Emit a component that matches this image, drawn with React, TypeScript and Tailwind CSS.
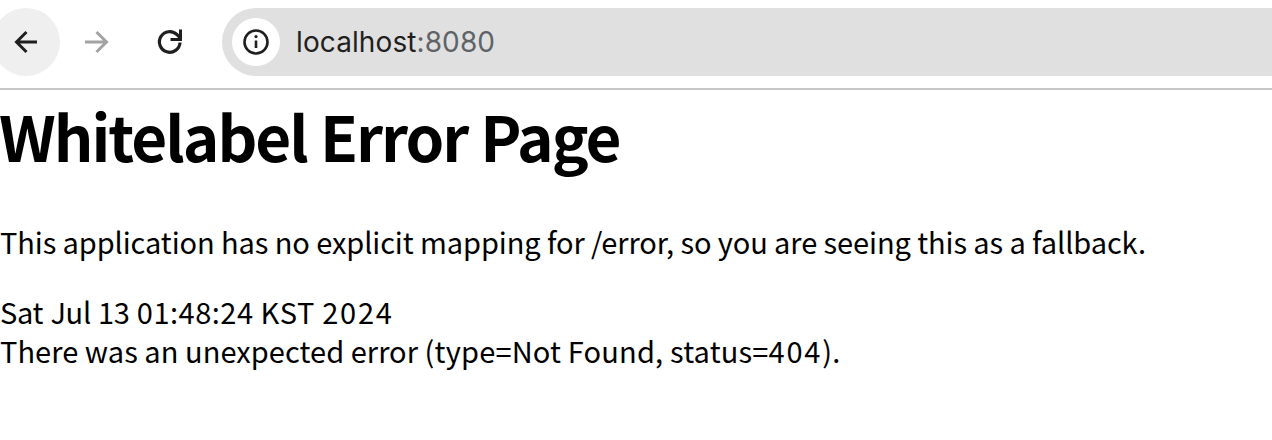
const font = "font-['Noto_Sans_CJK_KR','Noto_Sans',sans-serif]";

function Toolbar() {
  return (
    <div className="flex h-[90px] items-center overflow-hidden border-b-2 border-[#c7c7c7] bg-white pb-[4px]">
      <button className="-ml-2 flex h-[68px] w-[68px] shrink-0 items-center justify-center rounded-full bg-[#efefef]">
        <svg width="28" height="28" viewBox="0 0 28 28" fill="none" stroke="#1f1f1f" strokeWidth="3">
          <path d="M25 14H5M14.5 4 4.5 14l10 10" />
        </svg>
      </button>
      <button className="ml-[3px] flex h-[68px] w-[68px] shrink-0 items-center justify-center">
        <svg width="28" height="28" viewBox="0 0 28 28" fill="none" stroke="#a3a3a3" strokeWidth="3">
          <path d="M2 14h21M13.5 4l10 10-10 10" />
        </svg>
      </button>
      <button className="ml-[5px] flex h-[68px] w-[68px] shrink-0 items-center justify-center">
        <svg width="30" height="30" viewBox="0 0 30 30" fill="none" stroke="#1f1f1f" strokeWidth="3.2">
          <path d="M25 15.5a10.3 10.3 0 1 1-3-7.8l3 3" />
          <path d="M27 2.5v11.5H15.5l0-3h8.5V2.5z" fill="#1f1f1f" stroke="none" />
        </svg>
      </button>
      <div className="ml-[18px] flex h-[68px] flex-1 items-center rounded-l-[34px] bg-[#e0e0e0] pl-[10px]">
        <div className="flex h-[48px] w-[48px] items-center justify-center rounded-full bg-white">
          <svg width="28" height="28" viewBox="0 0 28 28" fill="none" stroke="#1f1f1f" strokeWidth="2.6">
            <circle cx="14" cy="14" r="11.5" />
            <path d="M14 12.5v7.5" />
            <circle cx="14" cy="8.6" r="1.6" fill="#1f1f1f" stroke="none" />
          </svg>
        </div>
        <span className="ml-[16px] font-['Inter',sans-serif] text-[28px] leading-none tracking-[0.1px] text-[#1f1f1f]">
          localhost<span className="text-[#5f6368]">:8080</span>
        </span>
      </div>
    </div>
  );
}

export default function App() {
  return (
    <div className={`h-[440px] w-[1272px] overflow-hidden bg-white text-black ${font}`}>
      <Toolbar />
      <h1 className="-ml-[1px] mt-[10px] text-[62px] font-bold leading-[70px] tracking-[-2px] [word-spacing:1px]">
        Whitelabel Error Page
      </h1>
      <p className="mt-[51px] text-[29px] leading-[40px] tracking-[-0.09px]">
        This application has no explicit mapping for /error, so you are seeing this as a fallback.
      </p>
      <div className="mt-[31px] text-[29px] leading-[39px] tracking-[-0.3px]">
        <span className="[word-spacing:1px]">Sat Jul 13 </span>
        <span className="tracking-[0.5px]">01:48:24 </span>
        <span className="tracking-[0.7px]">KST </span>
        <span className="tracking-[1.7px]">2024</span>
      </div>
      <div className="text-[29px] leading-[39px] tracking-[0.05px]">
        There was an unexpected error{" "}
        <span className="tracking-[0.18px]">(type=Not Found, status=</span>
        <span className="tracking-[1.8px]">404</span>
        <span className="tracking-[0.18px]">).</span>
      </div>
    </div>
  );
}
